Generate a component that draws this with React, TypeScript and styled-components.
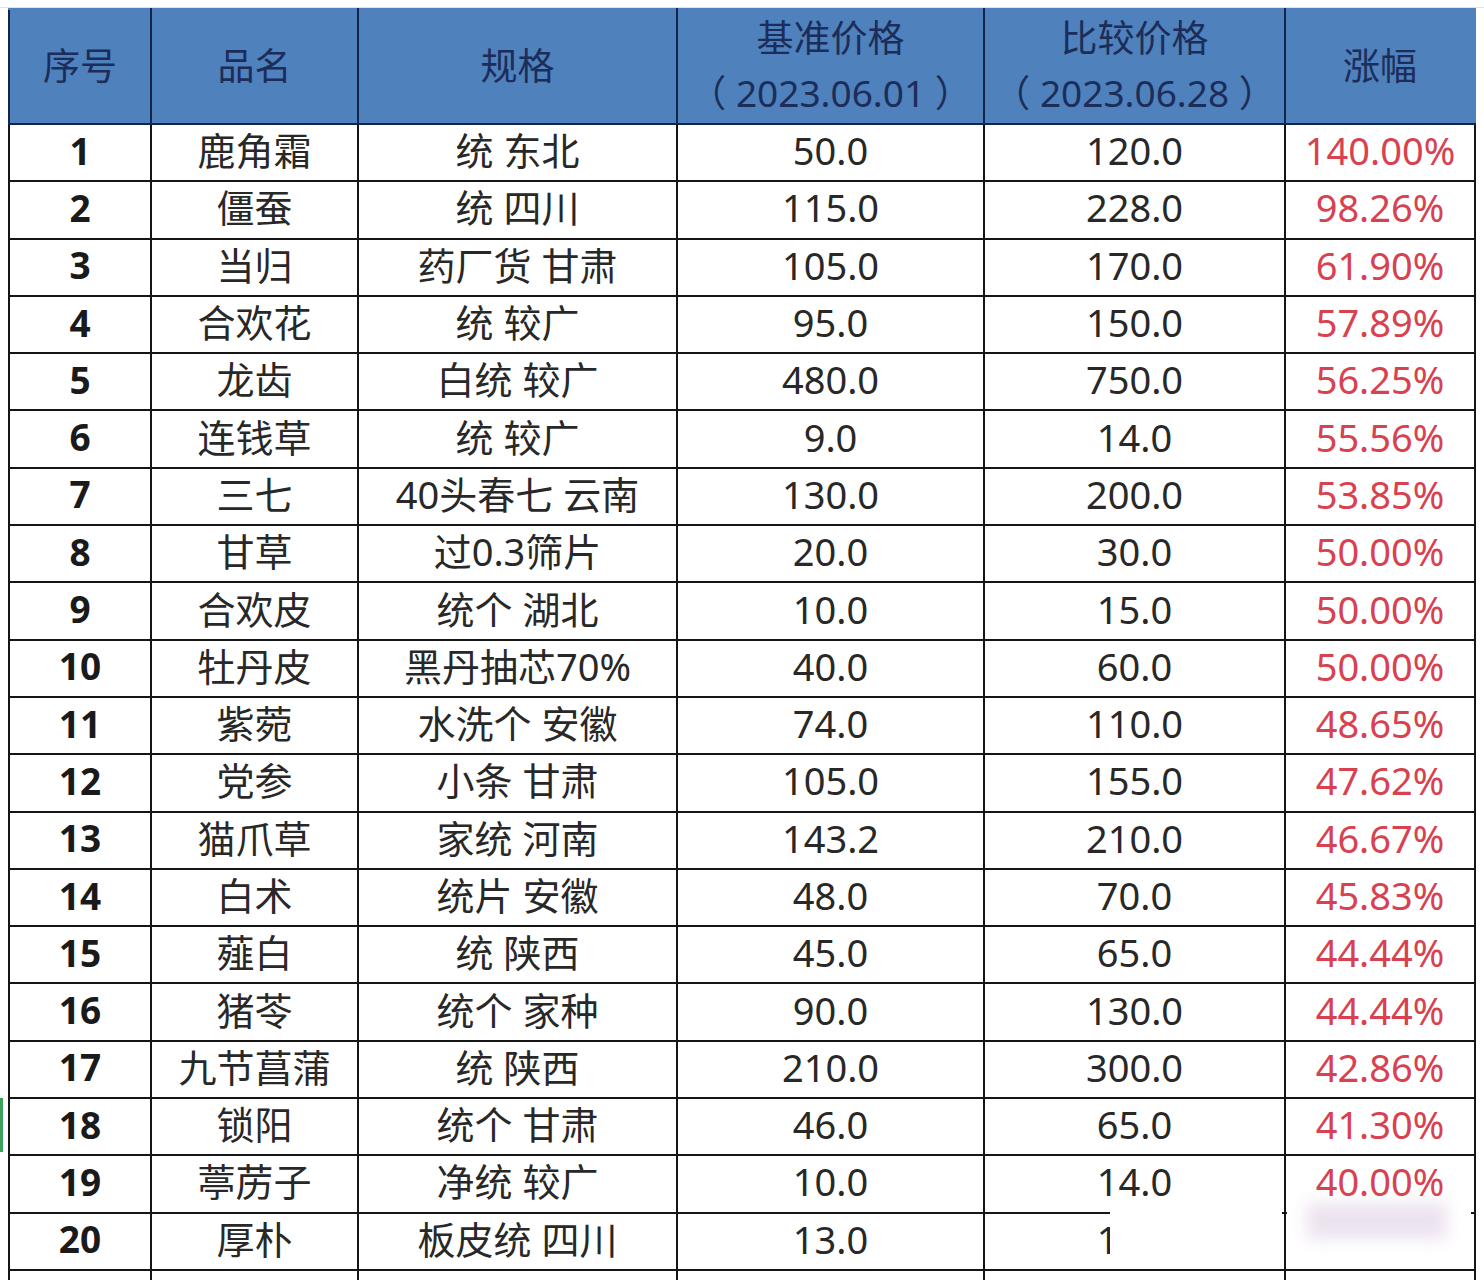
import styled, { createGlobalStyle } from "styled-components";

const GlobalStyle = createGlobalStyle`
  html, body {
    margin: 0;
    padding: 0;
    background: #ffffff;
  }
  body {
    font-family: "Noto Sans", "Noto Sans CJK SC", sans-serif;
  }
`;

type Row = [string, string, string, string, string, string];

const rows: Row[] = [
  ["1", "鹿角霜", "统 东北", "50.0", "120.0", "140.00%"],
  ["2", "僵蚕", "统 四川", "115.0", "228.0", "98.26%"],
  ["3", "当归", "药厂货 甘肃", "105.0", "170.0", "61.90%"],
  ["4", "合欢花", "统 较广", "95.0", "150.0", "57.89%"],
  ["5", "龙齿", "白统 较广", "480.0", "750.0", "56.25%"],
  ["6", "连钱草", "统 较广", "9.0", "14.0", "55.56%"],
  ["7", "三七", "40头春七 云南", "130.0", "200.0", "53.85%"],
  ["8", "甘草", "过0.3筛片", "20.0", "30.0", "50.00%"],
  ["9", "合欢皮", "统个 湖北", "10.0", "15.0", "50.00%"],
  ["10", "牡丹皮", "黑丹抽芯70%", "40.0", "60.0", "50.00%"],
  ["11", "紫菀", "水洗个 安徽", "74.0", "110.0", "48.65%"],
  ["12", "党参", "小条 甘肃", "105.0", "155.0", "47.62%"],
  ["13", "猫爪草", "家统 河南", "143.2", "210.0", "46.67%"],
  ["14", "白术", "统片 安徽", "48.0", "70.0", "45.83%"],
  ["15", "薤白", "统 陕西", "45.0", "65.0", "44.44%"],
  ["16", "猪苓", "统个 家种", "90.0", "130.0", "44.44%"],
  ["17", "九节菖蒲", "统 陕西", "210.0", "300.0", "42.86%"],
  ["18", "锁阳", "统个 甘肃", "46.0", "65.0", "41.30%"],
  ["19", "葶苈子", "净统 较广", "10.0", "14.0", "40.00%"],
];

const widths = [142, 207, 319, 307, 301, 190];

export default function App() {
  return (
    <>
      <GlobalStyle />
      <Sheet>
        <Table>
          <colgroup>
            {widths.map((w, i) => (
              <col key={i} style={{ width: w }} />
            ))}
          </colgroup>
          <thead>
            <HeadRow>
              <HeadCell>序号</HeadCell>
              <HeadCell>品名</HeadCell>
              <HeadCell>规格</HeadCell>
              <HeadCell>
                基准价格
                <br />
                （ 2023.06.01 ）
              </HeadCell>
              <HeadCell>
                比较价格
                <br />
                （ 2023.06.28 ）
              </HeadCell>
              <HeadCell $last>涨幅</HeadCell>
            </HeadRow>
          </thead>
          <tbody>
            {rows.map((r) => (
              <BodyRow key={r[0]}>
                <IndexCell>{r[0]}</IndexCell>
                <Cell>{r[1]}</Cell>
                <Cell>{r[2]}</Cell>
                <Cell>{r[3]}</Cell>
                <Cell>{r[4]}</Cell>
                <RiseCell>{r[5]}</RiseCell>
              </BodyRow>
            ))}
            <BodyRow>
              <IndexCell>20</IndexCell>
              <Cell>厚朴</Cell>
              <Cell>板皮统 四川</Cell>
              <Cell>13.0</Cell>
              <Cell>
                1<Hidden>8.0</Hidden>
              </Cell>
              <RiseCell />
            </BodyRow>
            <BodyRow>
              <IndexCell />
              <Cell />
              <Cell />
              <Cell />
              <Cell />
              <RiseCell />
            </BodyRow>
          </tbody>
        </Table>
        <Smudge $left={1110} $width={172} />
        <Smudge $left={1287} $width={184}>
          <SmudgeInk />
        </Smudge>
        <SelectMark />
      </Sheet>
    </>
  );
}

const Sheet = styled.div`
  position: relative;
  width: 1484px;
  height: 1280px;
  overflow: hidden;
  padding: 8px 0 0 8px;
  box-sizing: border-box;
  background:
    linear-gradient(#e4e4e4, #e4e4e4) 0 7px / 100% 1px no-repeat,
    #ffffff;
`;

const Table = styled.table`
  border-collapse: collapse;
  table-layout: fixed;
  width: 1466px;
  color: #222222;
  font-size: 38px;
`;

const HeadRow = styled.tr`
  height: 114px;
  background: #4f81bd;
`;

const HeadCell = styled.th<{ $last?: boolean }>`
  padding: 0 0 3px;
  border: 2px solid #14244a;
  border-right-color: ${(p) => (p.$last ? "#4f81bd" : "#14244a")};
  border-top-color: #4f81bd;
  color: #1b2d58;
  font-weight: 400;
  font-size: 37px;
  line-height: 55px;
  text-align: center;
  vertical-align: middle;
  white-space: nowrap;
`;

const BodyRow = styled.tr`
  height: 57.3px;
`;

const Cell = styled.td`
  padding: 0 0 5px;
  border: 2px solid #151515;
  text-align: center;
  vertical-align: middle;
  white-space: nowrap;
  line-height: 1;
  color: #282828;
`;

const IndexCell = styled(Cell)`
  font-weight: 700;
  font-size: 37px;
  color: #1a1a1a;
`;

const RiseCell = styled(Cell)`
  color: #d8414f;
  overflow: visible;
`;

const Hidden = styled.span`
  visibility: hidden;
`;

const Smudge = styled.div<{ $left: number; $width: number }>`
  position: absolute;
  left: ${(p) => p.$left}px;
  width: ${(p) => p.$width}px;
  top: 1197px;
  height: 66px;
  background: #ffffff;
`;

const SmudgeInk = styled.div`
  position: absolute;
  left: 20px;
  top: 6px;
  width: 140px;
  height: 36px;
  background: #c9aed0;
  opacity: 0.35;
  filter: blur(8px);
`;

const SelectMark = styled.div`
  position: absolute;
  left: 0;
  top: 1098px;
  width: 3px;
  height: 54px;
  background: #3aa05a;
`;
